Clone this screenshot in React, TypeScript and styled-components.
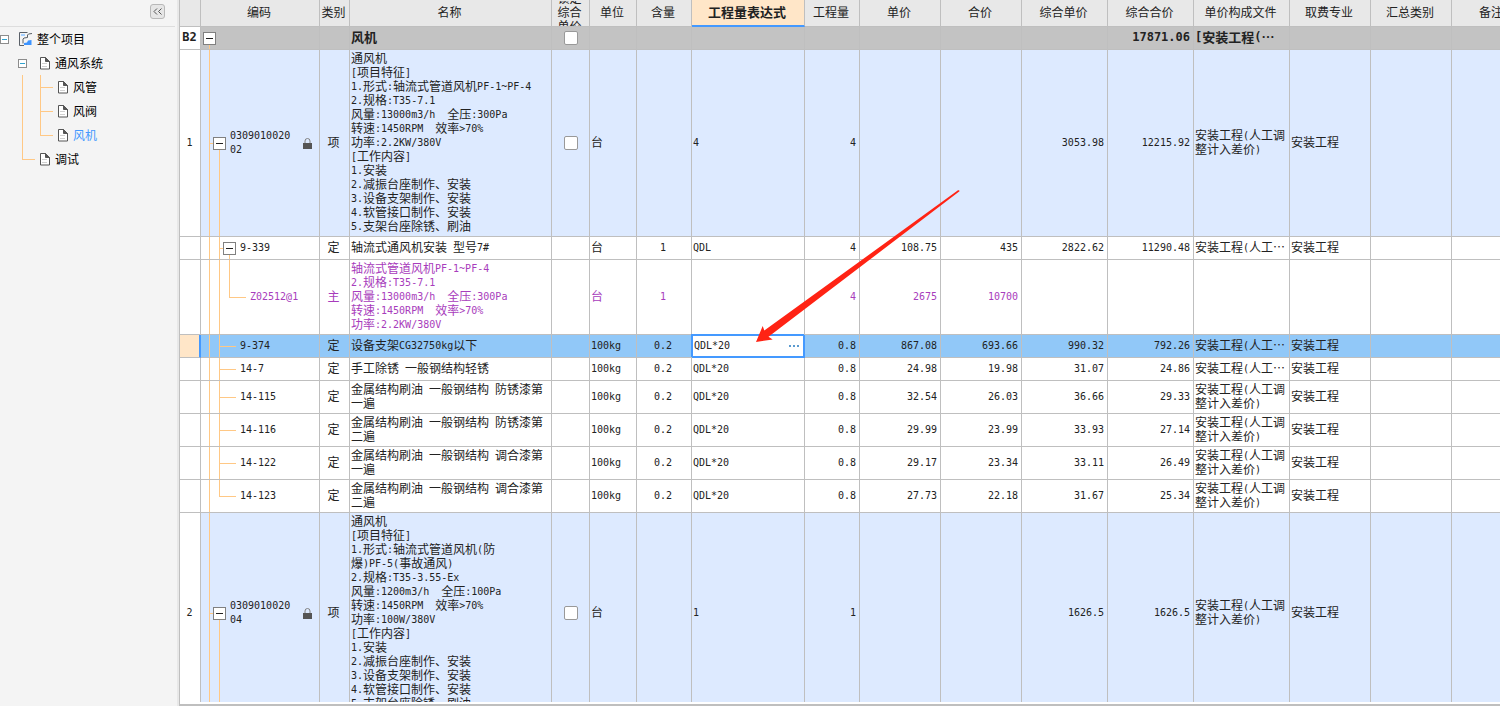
import React from "react";
import styled, { createGlobalStyle, css } from "styled-components";

const color = {
  line: "#bfbfbf",
  guide: "#ffc885",
  blue: "#4499ff",
  text: "#222222",
  purple: "#a83cbc",
  peach: "#ffe6c8",
};

const Global = createGlobalStyle`
  * { box-sizing: border-box; }
  body {
    margin: 0;
    background: #ffffff;
    color: ${color.text};
    font: 12px/14px "Noto Sans CJK SC", sans-serif;
  }
  button, input { font: inherit; color: inherit; margin: 0; padding: 0; }
`;

const Shell = styled.div`
  display: flex;
  height: 100vh;
  overflow: hidden;
`;

/* ---------- project tree ---------- */

const Sidebar = styled.aside`
  flex: 0 0 179px;
  background: #f4f4f4;
  border-right: 2px solid #e8e8e8;
`;

const SidebarHead = styled.div`
  display: flex;
  justify-content: flex-end;
  align-items: flex-start;
  height: 27px;
  margin-right: 2px;
  padding: 4px 10px 0 0;
  border-bottom: 1px solid #dddddd;
`;

const CollapseButton = styled.button`
  display: flex;
  align-items: center;
  justify-content: center;
  width: 15px;
  height: 15px;
  border: 1px solid #b8b8b8;
  border-radius: 3px;
  background: #e6e6e6;
`;

const TreeList = styled.ul`
  list-style: none;
  margin: 0;
  padding: 0;
`;

const Tree = styled(TreeList)`
  color: #000000;
`;

type Branch = "mid" | "last" | undefined;

const paint = (x: string, y: string, w: string, h: string) =>
  `linear-gradient(${color.guide}, ${color.guide}) ${x} ${y} / ${w} ${h} no-repeat`;

const TreeRow = styled.div<{ $level: number; $branch: Branch; $through?: boolean }>`
  display: flex;
  align-items: center;
  height: 24px;
  padding-left: ${(p) => p.$level * 18}px;
  background: ${(p) => {
    const layers: string[] = [];
    const x = p.$level * 18 + 4;
    if (p.$branch) {
      layers.push(paint(`${x}px`, "0", "1px", p.$branch === "mid" ? "100%" : "50%"));
      layers.push(paint(`${x}px`, "50%", "13px", "1px"));
    }
    if (p.$through) layers.push(paint("22px", "0", "1px", "100%"));
    return layers.length ? layers.join(", ") : "none";
  }};
`;

const TreeToggle = styled.button`
  display: flex;
  align-items: center;
  justify-content: center;
  width: 9px;
  height: 9px;
  border: 1px solid #8c8c8c;
  background: #ffffff;
  &::before {
    content: "";
    width: 5px;
    height: 1px;
    background: #2fa3cf;
  }
`;

const ToggleSpace = styled.span`
  width: 9px;
`;

const IconSlot = styled.span`
  display: flex;
  justify-content: center;
  width: 18px;
  margin: 0 2px 0 8px;
`;

const TreeLink = styled.a<{ $active?: boolean }>`
  color: ${(p) => (p.$active ? color.blue : "#000000")};
  text-decoration: none;
`;

const FileIcon = () => (
  <svg width="11" height="13" viewBox="0 0 11 13" fill="none">
    <path d="M1.500.5h5l4 4v7.500h-9z" fill="#fff" stroke="#555" />
    <path d="M6.500.5v4h4z" fill="#555" stroke="#555" />
    <path d="M3 6.500h5M3 9.500h5" stroke="#d0d0d0" />
  </svg>
);

const ProjectIcon = () => (
  <svg width="14" height="14" viewBox="0 0 14 14" fill="none">
    <path d="M5 13.500H.5V.5h8" stroke="#5a6068" />
    <path d="M13 1.500l-3.500.5-1 1v2.500l-3.500.5-1 1v4.500" stroke="#5a6068" />
    <path d="M2 3h4" stroke="#a5d0ff" strokeWidth="2" />
    <path d="M5 13v-2l3-.5 1-2 3.500-.5V13z" fill="#3d94ff" />
  </svg>
);

type NodeProps = {
  label: string;
  level: number;
  branch?: Branch;
  through?: boolean;
  open?: boolean;
  active?: boolean;
  children?: React.ReactNode;
};

const TreeNode = ({ label, level, branch, through, open, active, children }: NodeProps) => (
  <li>
    <TreeRow $level={level} $branch={branch} $through={through}>
      {open ? <TreeToggle aria-label={`折叠${label}`} /> : <ToggleSpace />}
      <IconSlot>{level === 0 ? <ProjectIcon /> : <FileIcon />}</IconSlot>
      <TreeLink href="#" $active={active}>{label}</TreeLink>
    </TreeRow>
    {children && <TreeList>{children}</TreeList>}
  </li>
);

/* ---------- bill grid ---------- */

const GridPane = styled.main`
  flex: 1;
  min-width: 0;
  padding-bottom: 2px;
  border-left: 1px solid ${color.line};
  border-bottom: 2px solid ${color.line};
`;

const GridClip = styled.div`
  position: relative;
  height: 100%;
  overflow: hidden;
`;

const Table = styled.table`
  width: 100%;
  min-width: 1353px;
  table-layout: fixed;
  border-collapse: separate;
  border-spacing: 0;
`;

const HeadCell = styled.th<{ $active?: boolean }>`
  padding: 0 3px 0 1px;
  border-right: 1px solid ${color.line};
  border-bottom: 1px solid ${color.line};
  background: #e8e8e8;
  font-weight: 400;
  ${(p) =>
    p.$active &&
    css`
      background: ${color.peach};
      border-bottom: 2px solid ${color.blue};
      font-size: 13px;
      font-weight: 700;
    `}
`;

const HeadLabel = styled.div`
  display: flex;
  align-items: center;
  justify-content: center;
  height: 25px;
  padding-bottom: 2px;
  overflow: hidden;
`;

type Kind = "group" | "item" | "quota" | "material" | "selected";

const rowLook = {
  group: css`
    background: #c3c3c3;
    font-size: 13px;
    font-weight: 700;
  `,
  item: css`
    background: #ddeaff;
  `,
  quota: css`
    background: #ffffff;
  `,
  material: css`
    background: #ffffff;
    color: ${color.purple};
  `,
  selected: css`
    background: #91c8f8;
  `,
};

const Row = styled.tr<{ $kind: Kind }>`
  height: 23px;
  ${(p) => rowLook[p.$kind]}
`;

const Cell = styled.td<{ $align?: "left" | "center" | "right" }>`
  padding: 1px 3px 3px 1px;
  border-right: 1px solid ${color.line};
  border-bottom: 1px solid ${color.line};
  text-align: ${(p) => p.$align || "left"};
  vertical-align: middle;
  white-space: pre-wrap;
`;

const CheckCell = styled(Cell)`
  padding: 2px;
`;

const IndexCell = styled(Cell)<{ $current: boolean }>`
  padding: 0 1px 2px 0;
  text-align: center;
  background: #ffffff;
  ${(p) =>
    p.$current &&
    css`
      background: ${color.peach};
      border-right: 2px solid ${color.blue};
    `}
`;

type Guide = "root" | "item" | "quotaOpen" | "leaf" | "leafEnd" | "material";

const guides: Record<Guide, string[]> = {
  root: [paint("8px", "100%", "1px", "50%")],
  item: [
    paint("8px", "0", "1px", "100%"),
    paint("8px", "50%", "6px", "1px"),
    paint("18px", "100%", "1px", "50%"),
  ],
  quotaOpen: [
    paint("8px", "0", "1px", "100%"),
    paint("18px", "0", "1px", "100%"),
    paint("18px", "50%", "6px", "1px"),
    paint("28px", "100%", "1px", "50%"),
  ],
  material: [
    paint("8px", "0", "1px", "100%"),
    paint("18px", "0", "1px", "100%"),
    paint("28px", "0", "1px", "50%"),
    paint("28px", "50%", "17px", "1px"),
  ],
  leaf: [
    paint("8px", "0", "1px", "100%"),
    paint("18px", "0", "1px", "100%"),
    paint("18px", "50%", "17px", "1px"),
  ],
  leafEnd: [
    paint("8px", "0", "1px", "100%"),
    paint("18px", "0", "1px", "50%"),
    paint("18px", "50%", "17px", "1px"),
  ],
};

const indent: Record<Guide, number> = {
  root: 2,
  item: 12,
  quotaOpen: 22,
  material: 49,
  leaf: 39,
  leafEnd: 39,
};

const CodeCell = styled(Cell)<{ $guide: Guide }>`
  padding: 0 7px 0 ${(p) => indent[p.$guide]}px;
  background: ${(p) => guides[p.$guide].join(", ")};
`;

const CodeLine = styled.div`
  display: flex;
  align-items: center;
`;

const RowToggle = styled.button`
  display: flex;
  align-items: center;
  justify-content: center;
  flex: 0 0 13px;
  height: 13px;
  margin-right: 4px;
  border: 1px solid #808080;
  background: #ffffff;
  &::before {
    content: "";
    width: 7px;
    height: 1px;
    background: #222222;
  }
`;

const CodeText = styled.span`
  flex: 1;
  min-width: 0;
  padding-bottom: 2px;
  word-break: break-all;
`;

const LockIcon = styled.svg`
  flex: 0 0 9px;
  margin-left: 8px;
`;

const Check = styled.input`
  appearance: none;
  display: block;
  width: 14px;
  height: 14px;
  margin: 0 auto;
  border: 1px solid #999999;
  border-radius: 2px;
  background: #ffffff;
`;

const Latin = styled.span`
  font-family: "DejaVu Sans Mono", monospace;
  font-size: 10px;
  line-height: 10px;
  vertical-align: 1px;
  [data-strong] & {
    font-size: 12px;
  }
`;

const EditCell = styled(Cell)`
  padding: 0 4px 0 1px;
  border: 1px solid ${color.blue};
  border-right-width: 2px;
  border-bottom-width: 2px;
  box-shadow: -1px -1px 0 ${color.blue};
  background: #ffffff;
`;

const EditBox = styled.div`
  display: flex;
  align-items: center;
`;

const EditInput = styled.input`
  flex: 1;
  min-width: 0;
  height: 18px;
  padding-bottom: 2px;
  border: 0;
  outline: 0;
  background: transparent;
  font: 10px/14px "DejaVu Sans Mono", monospace;
`;

const MoreButton = styled.button`
  display: flex;
  align-items: center;
  height: 16px;
  border: 0;
  background: transparent;
`;

const Pointer = styled.svg`
  position: absolute;
  left: 575px;
  top: 189px;
  pointer-events: none;
`;

/* Half-width characters take the monospaced face, everything else the CJK one. */
const Mixed = ({ children }: { children: string }) => (
  <>
    {children.split(/([\x20-\x7e]+)/).map((part, i) =>
      i % 2 ? <Latin key={i}>{part}</Latin> : part
    )}
  </>
);

const columns: { title: string; width?: number; active?: boolean }[] = [
  { title: "", width: 21 },
  { title: "编码", width: 119 },
  { title: "类别", width: 30 },
  { title: "名称", width: 202 },
  { title: "锁定综合单价", width: 38 },
  { title: "单位", width: 47 },
  { title: "含量", width: 55 },
  { title: "工程量表达式", width: 113, active: true },
  { title: "工程量", width: 55 },
  { title: "单价", width: 81 },
  { title: "合价", width: 81 },
  { title: "综合单价", width: 86 },
  { title: "综合合价", width: 86 },
  { title: "单价构成文件", width: 96 },
  { title: "取费专业", width: 81 },
  { title: "汇总类别", width: 81 },
  { title: "备注" },
];

type Item = {
  kind: Kind;
  guide: Guide;
  no?: string;
  code?: string;
  type?: string;
  name: string;
  unit?: string;
  content?: string;
  expr?: string;
  qty?: string;
  price?: string;
  total?: string;
  fullPrice?: string;
  fullTotal?: string;
  file?: string;
  major?: string;
};

const FILE = "安装工程(人工调整计入差价)";
const FILE_CUT = "安装工程(人工…";
const MAJOR = "安装工程";
const WORK = "[工作内容]\n1.安装\n2.减振台座制作、安装\n3.设备支架制作、安装\n4.软管接口制作、安装\n5.支架台座除锈、刷油";

const quota = { kind: "quota" as Kind, guide: "leaf" as Guide, type: "定", unit: "100kg", content: "0.2", expr: "QDL*20", qty: "0.8", file: FILE, major: MAJOR };

const items: Item[] = [
  { kind: "group", guide: "root", no: "B2", name: "风机", fullTotal: "17871.06", file: "[安装工程(…" },
  {
    kind: "item", guide: "item", no: "1", code: "030901002002", type: "项",
    name: "通风机\n[项目特征]\n1.形式:轴流式管道风机PF-1~PF-4\n2.规格:T35-7.1\n风量:13000m3/h  全压:300Pa\n转速:1450RPM  效率>70%\n功率:2.2KW/380V\n" + WORK,
    unit: "台", expr: "4", qty: "4", fullPrice: "3053.98", fullTotal: "12215.92", file: FILE, major: MAJOR,
  },
  {
    kind: "quota", guide: "quotaOpen", code: "9-339", type: "定", name: "轴流式通风机安装 型号7#",
    unit: "台", content: "1", expr: "QDL", qty: "4", price: "108.75", total: "435",
    fullPrice: "2822.62", fullTotal: "11290.48", file: FILE_CUT, major: MAJOR,
  },
  {
    kind: "material", guide: "material", code: "Z02512@1", type: "主",
    name: "轴流式管道风机PF-1~PF-4\n2.规格:T35-7.1\n风量:13000m3/h  全压:300Pa\n转速:1450RPM  效率>70%\n功率:2.2KW/380V",
    unit: "台", content: "1", qty: "4", price: "2675", total: "10700",
  },
  { ...quota, kind: "selected", code: "9-374", name: "设备支架CG32750kg以下", price: "867.08", total: "693.66", fullPrice: "990.32", fullTotal: "792.26", file: FILE_CUT },
  { ...quota, code: "14-7", name: "手工除锈 一般钢结构轻锈", price: "24.98", total: "19.98", fullPrice: "31.07", fullTotal: "24.86", file: FILE_CUT },
  { ...quota, code: "14-115", name: "金属结构刷油 一般钢结构 防锈漆第一遍", price: "32.54", total: "26.03", fullPrice: "36.66", fullTotal: "29.33" },
  { ...quota, code: "14-116", name: "金属结构刷油 一般钢结构 防锈漆第二遍", price: "29.99", total: "23.99", fullPrice: "33.93", fullTotal: "27.14" },
  { ...quota, code: "14-122", name: "金属结构刷油 一般钢结构 调合漆第一遍", price: "29.17", total: "23.34", fullPrice: "33.11", fullTotal: "26.49" },
  { ...quota, guide: "leafEnd", code: "14-123", name: "金属结构刷油 一般钢结构 调合漆第二遍", price: "27.73", total: "22.18", fullPrice: "31.67", fullTotal: "25.34" },
  {
    kind: "item", guide: "item", no: "2", code: "030901002004", type: "项",
    name: "通风机\n[项目特征]\n1.形式:轴流式管道风机(防\n爆)PF-5(事故通风)\n2.规格:T35-3.55-Ex\n风量:1200m3/h  全压:100Pa\n转速:1450RPM  效率>70%\n功率:100W/380V\n" + WORK,
    unit: "台", expr: "1", qty: "1", fullPrice: "1626.5", fullTotal: "1626.5", file: FILE, major: MAJOR,
  },
];

const GridRow = ({ item }: { item: Item }) => {
  const strong = item.kind === "group" ? { "data-strong": true } : {};
  const foldable = ["root", "item", "quotaOpen"].includes(item.guide);
  const lockable = item.kind === "group" || item.kind === "item";
  const text = (value?: string, align?: "left" | "center" | "right") => (
    <Cell $align={align}>{value && <Mixed>{value}</Mixed>}</Cell>
  );
  return (
    <Row $kind={item.kind} {...strong}>
      <IndexCell $current={item.kind === "selected"}>{item.no && <Mixed>{item.no}</Mixed>}</IndexCell>
      <CodeCell $guide={item.guide}>
        <CodeLine>
          {foldable && <RowToggle aria-label={`折叠 ${item.code || item.name}`} />}
          {item.code && <CodeText><Mixed>{item.code}</Mixed></CodeText>}
          {item.kind === "item" && (
            <LockIcon width="9" height="11" viewBox="0 0 9 11" fill="none">
              <path d="M2 5V3a2.500 2.500 0 0 1 5 0v2" stroke="#808080" />
              <path d="M0 5h9v6H0z" fill="#555" />
            </LockIcon>
          )}
        </CodeLine>
      </CodeCell>
      {text(item.type, "center")}
      {text(item.name)}
      <CheckCell>{lockable && <Check type="checkbox" aria-label="锁定综合单价" />}</CheckCell>
      {text(item.unit)}
      {text(item.content, "center")}
      {item.kind === "selected" ? (
        <EditCell>
          <EditBox>
            <EditInput aria-label="工程量表达式" defaultValue={item.expr} />
            <MoreButton aria-label="更多">
              <svg width="10" height="2" viewBox="0 0 10 2" fill="#5b9bd0">
                <path d="M0 0h2v2H0zM4 0h2v2H4zM8 0h2v2H8z" />
              </svg>
            </MoreButton>
          </EditBox>
        </EditCell>
      ) : (
        text(item.expr)
      )}
      {text(item.qty, "right")}
      {text(item.price, "right")}
      {text(item.total, "right")}
      {text(item.fullPrice, "right")}
      {text(item.fullTotal, "right")}
      {text(item.file)}
      {text(item.major)}
      <Cell />
      <Cell />
    </Row>
  );
};

export default function App() {
  return (
    <>
      <Global />
      <Shell lang="zh-CN">
        <Sidebar>
          <SidebarHead>
            <CollapseButton aria-label="收起">
              <svg width="9" height="7" viewBox="0 0 9 7" fill="none" stroke="#555">
                <path d="M4 .5l-3 3 3 3M8.500.5l-3 3 3 3" />
              </svg>
            </CollapseButton>
          </SidebarHead>
          <Tree>
            <TreeNode label="整个项目" level={0} open>
              <TreeNode label="通风系统" level={1} open>
                <TreeNode label="风管" level={2} branch="mid" through />
                <TreeNode label="风阀" level={2} branch="mid" through />
                <TreeNode label="风机" level={2} branch="last" through active />
              </TreeNode>
              <TreeNode label="调试" level={1} branch="last" />
            </TreeNode>
          </Tree>
        </Sidebar>
        <GridPane>
          <GridClip>
            <Table>
              <colgroup>
                {columns.map((c, i) => (
                  <col key={i} width={c.width} />
                ))}
              </colgroup>
              <thead>
                <tr>
                  {columns.map((c, i) => (
                    <HeadCell key={i} $active={c.active}>
                      <HeadLabel>{c.title}</HeadLabel>
                    </HeadCell>
                  ))}
                </tr>
              </thead>
              <tbody>
                {items.map((item, i) => (
                  <GridRow key={i} item={item} />
                ))}
              </tbody>
            </Table>
            <Pointer width="206" height="155" viewBox="755 189 206 155">
              <path
                d="M756 342l6.700-16 1.600 4.500L958 190.300q1.500-.6 1.500 1L768.500 336.800l4.200 2.700z"
                fill="#ff2314"
              />
            </Pointer>
          </GridClip>
        </GridPane>
      </Shell>
    </>
  );
}
